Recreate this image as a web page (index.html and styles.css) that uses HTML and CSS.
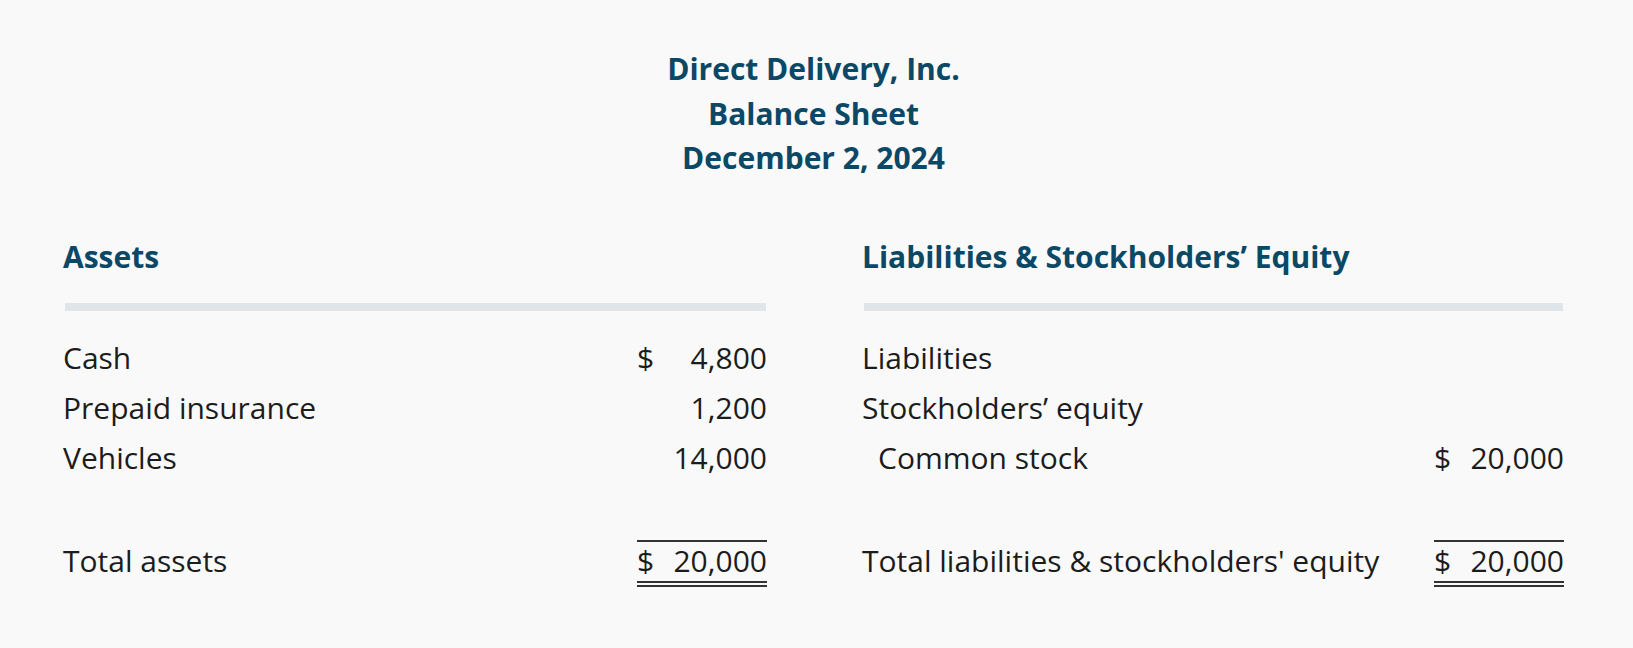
FILE: index.html
```
<!DOCTYPE html>
<html lang="en">
<head>
    <meta charset="UTF-8">
    <meta name="viewport" content="width=device-width, initial-scale=1.0">
    <title>Balance Sheet</title>
    <link rel="stylesheet" href="styles.css">
</head>
<body>
    <div class="statement">
        <div class="statement-title">
            <div>Direct Delivery, Inc.</div>
            <div>Balance Sheet</div>
            <div>December 2, 2024</div>
        </div>

        <div class="sheet">
            <section class="side">
                <h2>Assets</h2>
                <div class="rule"></div>
                <div class="row">
                    <span class="label">Cash</span>
                    <span class="amount"><span class="cur">$</span><span>4,800</span></span>
                </div>
                <div class="row">
                    <span class="label">Prepaid insurance</span>
                    <span class="amount"><span class="cur"></span><span>1,200</span></span>
                </div>
                <div class="row">
                    <span class="label">Vehicles</span>
                    <span class="amount"><span class="cur"></span><span>14,000</span></span>
                </div>
                <div class="row total">
                    <span class="label">Total assets</span>
                    <span class="amount"><span class="cur">$</span><span>20,000</span></span>
                </div>
            </section>

            <section class="side">
                <h2>Liabilities &amp; Stockholders’ Equity</h2>
                <div class="rule"></div>
                <div class="row">
                    <span class="label">Liabilities</span>
                </div>
                <div class="row">
                    <span class="label">Stockholders’ equity</span>
                </div>
                <div class="row">
                    <span class="label indent">Common stock</span>
                    <span class="amount"><span class="cur">$</span><span>20,000</span></span>
                </div>
                <div class="row total">
                    <span class="label">Total liabilities &amp; stockholders' equity</span>
                    <span class="amount"><span class="cur">$</span><span>20,000</span></span>
                </div>
            </section>
        </div>
    </div>
</body>
</html>
```

FILE: styles.css
```
body {
    margin: 0;
    background-color: #f9f9f9;
    font-family: "Open Sans", "Liberation Sans", sans-serif;
    color: #1c1c1c;
}
.statement {
    width: 1501px;
    margin-left: 63px;
    padding-top: 47px;
}
.statement-title {
    text-align: center;
    font-size: 30px;
    font-weight: 700;
    line-height: 44.5px;
    color: #0b4866;
}
.sheet {
    display: grid;
    grid-template-columns: 704px 702px;
    column-gap: 95px;
    margin-top: 56px;
}
.side h2 {
    margin: 0;
    font-size: 30px;
    line-height: 40px;
    font-weight: 700;
    color: #0b4866;
}
.rule {
    height: 8px;
    margin: 26px 1px 22px 2px;
    background-color: #dfe5e9;
}
.row {
    display: flex;
    justify-content: space-between;
    font-size: 30px;
    line-height: 50px;
}
.indent {
    padding-left: 16px;
}
.amount {
    display: flex;
    justify-content: space-between;
    width: 130px;
}
.total {
    margin-top: 57px;
    line-height: 38px;
}
.total .label {
    padding-top: 2px;
}
.total .amount {
    border-top: 2px solid #333;
    border-bottom: 6px double #333;
    padding-bottom: 1px;
}
```
